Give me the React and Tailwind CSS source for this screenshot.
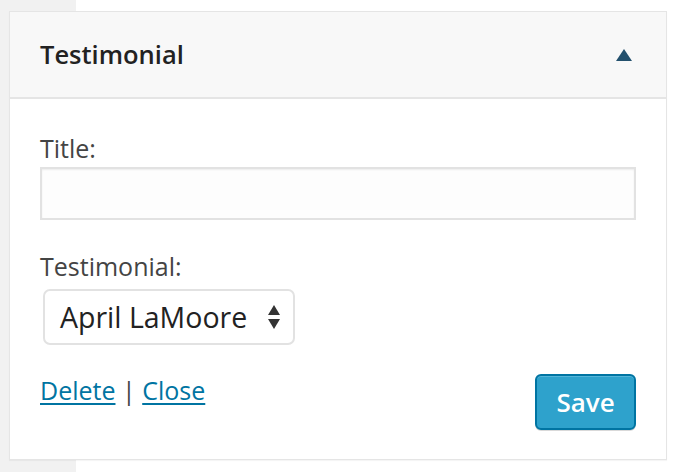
import React from "react";

const Arrows = () => (
  <svg width="14" height="26" viewBox="0 0 14 26" className="shrink-0">
    <path d="M7 1 L13 11 L1 11 Z" fill="#333" />
    <path d="M1 15 L13 15 L7 25 Z" fill="#333" />
  </svg>
);

export default function App() {
  return (
    <div
      className="relative w-[678px] h-[472px] overflow-hidden bg-white"
      style={{ fontFamily: '"Open Sans", "Noto Sans", sans-serif' }}
    >
      {/* left admin strip */}
      <div className="absolute left-0 top-0 bottom-0 w-[76px] bg-[#f1f1f1]" />

      <div className="relative ml-[9px] mt-[11px] w-[658px] h-[449px] border border-[#e5e5e5] bg-white shadow-[0_1px_1px_rgba(0,0,0,0.04)] flex flex-col">
        {/* header */}
        <div className="h-[87px] shrink-0 flex items-center justify-between pl-[30px] pr-[34px] bg-[#f8f8f8] border-b-2 border-[#e5e5e5]">
          <h3 className="text-[25.5px] font-semibold text-[#222]">Testimonial</h3>
          <svg width="16" height="12" viewBox="0 0 16 12">
            <path d="M8 0 L16 12 L0 12 Z" fill="#23506d" />
          </svg>
        </div>

        {/* body */}
        <div className="flex-1 flex flex-col px-[30px] pt-[32px] text-[#444]">
          <label className="text-[25px] leading-[35px]">Title:</label>
          <input
            type="text"
            className="mt-[1px] h-[53px] w-full border-2 border-[#e2e2e2] bg-[#fdfdfd] shadow-[inset_0_1px_2px_rgba(0,0,0,0.07)] outline-none"
          />

          <label className="mt-[29px] text-[25px] leading-[35px]">Testimonial:</label>
          <div className="mt-[5px] ml-[3px] flex h-[56px] w-[252px] items-center justify-between rounded-[7px] border-2 border-[#e2e2e2] bg-white pl-[15px] pr-[12px]">
            <span className="text-[28.5px] text-[#222]">April LaMoore</span>
            <Arrows />
          </div>

          <div className="mt-[27px] flex items-start justify-between">
            <div className="text-[25px] leading-[36px]">
              <a href="#" className="text-[#0074a2] underline underline-offset-[3px]">Delete</a>
              <span className="text-[#444]"> | </span>
              <a href="#" className="text-[#0074a2] underline underline-offset-[3px]">Close</a>
            </div>
            <button className="mt-[2px] h-[56px] w-[101px] rounded-[6px] border-2 border-[#0074a2] bg-[#2ea2cc] text-[26px] font-semibold text-white shadow-[inset_0_1px_0_rgba(120,200,230,0.5),0_1px_0_rgba(0,0,0,0.15)]">
              Save
            </button>
          </div>
        </div>
      </div>
    </div>
  );
}
